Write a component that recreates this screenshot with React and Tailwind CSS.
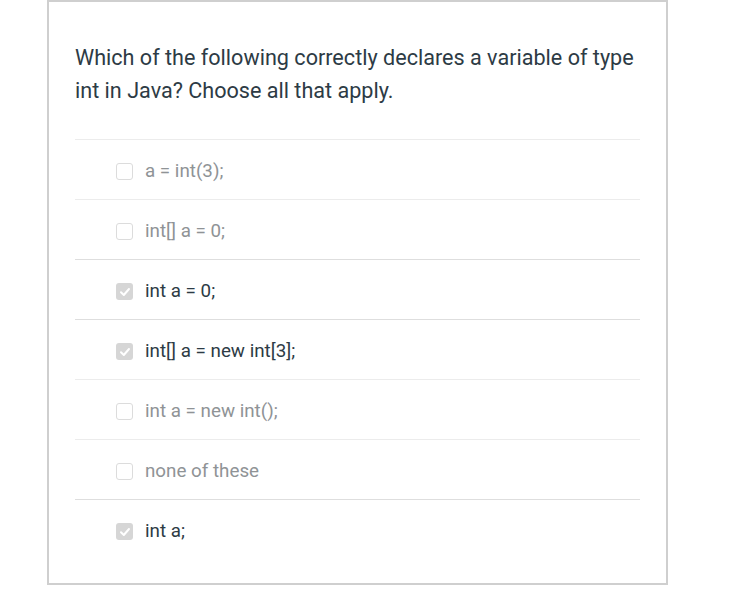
const options = [
  { label: "a = int(3);", checked: false },
  { label: "int[] a = 0;", checked: false },
  { label: "int a = 0;", checked: true },
  { label: "int[] a = new int[3];", checked: true },
  { label: "int a = new int();", checked: false },
  { label: "none of these", checked: false },
  { label: "int a;", checked: true },
];

function Box({ checked }) {
  if (checked) {
    return (
      <span className="flex h-[17px] w-[17px] items-center justify-center rounded-[3px] bg-[#d6d6d6]">
        <svg width="12" height="12" viewBox="0 0 12 12" fill="none">
          <path d="M2 6.3 L4.8 9 L10 3" stroke="#fff" strokeWidth="2" strokeLinecap="round" strokeLinejoin="round" />
        </svg>
      </span>
    );
  }
  return <span className="block h-[17px] w-[17px] rounded-[3px] border border-[#dcdcdc] bg-white" />;
}

export default function App() {
  return (
    <div className="min-h-screen bg-white" style={{ fontFamily: "Roboto, 'Liberation Sans', sans-serif" }}>
      <div className="ml-[47px] w-[621px] h-[585px] border-2 border-[#cfcfcf] px-[26px] pt-[39px]">
        <p className="text-[21.6px] leading-[33px] text-[#2d3b45]">
          Which of the following correctly declares a variable of type int in Java? Choose all that apply.
        </p>
        <div className="mt-[32px]">
          {options.map((o, i) => (
            <div
              key={i}
              className={`flex h-[60px] items-center border-t pt-[4px] ${i === 2 || i === 3 || i === 6 ? "border-[#dedede]" : "border-[#ececec]"} pl-[41px]`}
            >
              <Box checked={o.checked} />
              <span className={`ml-[12px] text-[18.8px] ${o.checked ? "text-[#2d3b45]" : "text-[#8f9396]"}`}>{o.label}</span>
            </div>
          ))}
        </div>
      </div>
    </div>
  );
}
